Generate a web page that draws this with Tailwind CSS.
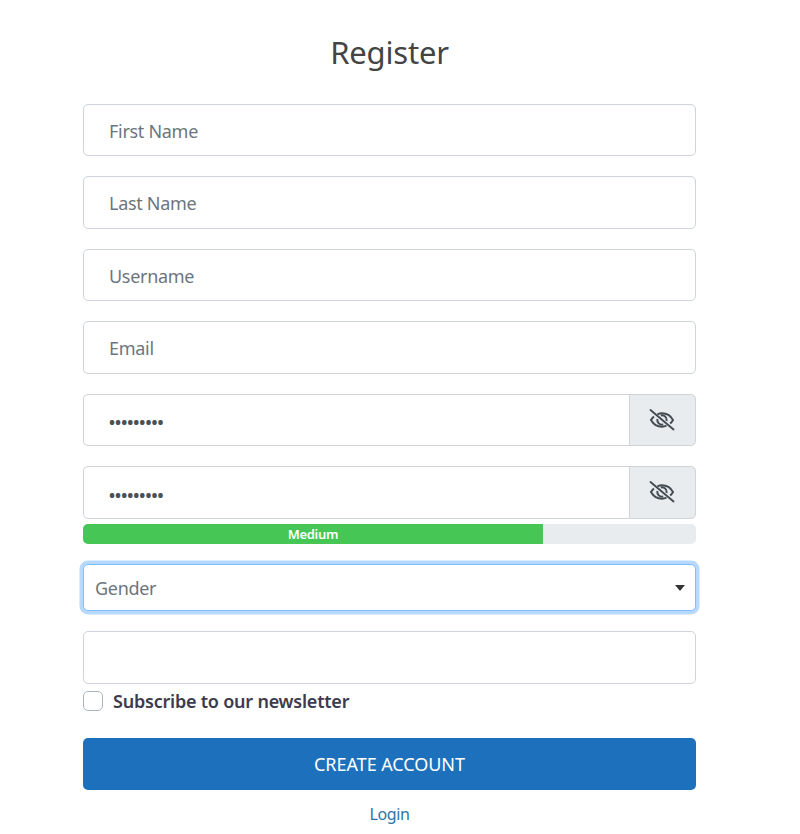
<!DOCTYPE html>
<html lang="en">
<head>
<meta charset="utf-8">
<title>Register</title>
<script src="https://cdn.jsdelivr.net/npm/@tailwindcss/browser@4"></script>
</head>
<body class="bg-white font-['Noto_Sans','Liberation_Sans',sans-serif] h-[834px] overflow-hidden">
<main class="w-[613px] ml-[83px] flex flex-col">
  <h1 class="h-[104px] pt-[29px] text-center text-[31px] leading-[46px] text-[#444444] tracking-[-0.2px]">Register</h1>
  <form class="flex flex-col">
    <input type="text" placeholder="First Name" class="h-[52.4px] mb-5 pl-[25px] pr-[25px] pt-[2px] w-full bg-white border border-[#ced4da] rounded-[5px] text-[18px] tracking-[-0.3px] text-[#495057] placeholder:text-[#6c757d] outline-none">
    <input type="text" placeholder="Last Name" class="h-[52.4px] mb-5 pl-[25px] pr-[25px] pt-[1px] w-full bg-white border border-[#ced4da] rounded-[5px] text-[18px] tracking-[-0.3px] text-[#495057] placeholder:text-[#6c757d] outline-none">
    <input type="text" placeholder="Username" class="h-[52.4px] mb-5 pl-[25px] pr-[25px] pt-[2px] w-full bg-white border border-[#ced4da] rounded-[5px] text-[18px] tracking-[-0.3px] text-[#495057] placeholder:text-[#6c757d] outline-none">
    <input type="email" placeholder="Email" class="h-[52.4px] mb-5 pl-[25px] pr-[25px] pt-[2px] w-full bg-white border border-[#ced4da] rounded-[5px] text-[18px] tracking-[-0.3px] text-[#495057] placeholder:text-[#6c757d] outline-none">
    <div class="flex h-[52.4px] mb-5">
      <input type="password" value="123456789" class="flex-1 min-w-0 h-full pl-[25px] pr-[25px] pt-[5px] bg-white border border-[#ced4da] rounded-l-[5px] text-[16px] font-bold tracking-[0.05px] text-[#495057] outline-none">
      <span class="w-[67px] h-full -ml-px flex items-center justify-center bg-[#e9ecef] border border-[#ced4da] rounded-r-[5px] text-[#444b52]">
        <svg class="w-[26px] h-[22px] -translate-x-px" viewBox="0 0 26 22" fill="none" stroke="currentColor" stroke-width="2" stroke-linecap="butt"><path d="M8.500 5.300C10 4.600 11.400 4.300 13 4.300c4.600 0 8.700 2.600 11 6.700-.8 1.400-1.700 2.600-2.900 3.600"/><path d="M17.500 16.700c-1.500.7-2.900 1-4.500 1-4.600 0-8.700-2.600-11-6.700.8-1.400 1.700-2.600 2.900-3.600"/><path d="M8.400 10A4.700 4.700 0 0 0 14.200 15.500"/><path d="M11.800 6.500A4.700 4.700 0 0 1 17.600 12"/><path d="M1.500 1 24.500 20.500" stroke-width="1.900" stroke-linecap="round"/></svg>
      </span>
    </div>
    <div class="flex h-[53px]">
      <input type="password" value="123456789" class="flex-1 min-w-0 h-full pl-[25px] pr-[25px] pt-[5px] bg-white border border-[#ced4da] rounded-l-[5px] text-[16px] font-bold tracking-[0.05px] text-[#495057] outline-none">
      <span class="w-[67px] h-full -ml-px flex items-center justify-center bg-[#e9ecef] border border-[#ced4da] rounded-r-[5px] text-[#444b52]">
        <svg class="w-[26px] h-[22px] -translate-x-px" viewBox="0 0 26 22" fill="none" stroke="currentColor" stroke-width="2" stroke-linecap="butt"><path d="M8.500 5.300C10 4.600 11.400 4.300 13 4.300c4.600 0 8.700 2.600 11 6.700-.8 1.400-1.700 2.600-2.900 3.600"/><path d="M17.500 16.700c-1.500.7-2.900 1-4.500 1-4.600 0-8.700-2.600-11-6.700.8-1.400 1.700-2.600 2.900-3.600"/><path d="M8.400 10A4.700 4.700 0 0 0 14.200 15.500"/><path d="M11.800 6.500A4.700 4.700 0 0 1 17.600 12"/><path d="M1.500 1 24.500 20.500" stroke-width="1.900" stroke-linecap="round"/></svg>
      </span>
    </div>
    <div class="mt-[5px] h-5 w-full flex bg-[#e9ecef] rounded-[5px] overflow-hidden">
      <div class="w-[75%] h-full bg-[#45c655] text-white text-[13px] font-semibold leading-[20px] text-center tracking-[-0.3px]">Medium</div>
    </div>
    <div class="mt-[20px] mb-[20px] h-[47px] w-full relative bg-white border border-[#80bdff] rounded-[5px] shadow-[0_0_0_3.500px_#b6d9fd] flex items-center pl-[11px] pt-[3px] text-[18px] tracking-[-0.3px] text-[#6c757d]">
      Gender
      <span class="absolute right-[10px] top-[20px] w-0 h-0 border-x-[5px] border-x-transparent border-t-[6px] border-t-[#333333]"></span>
    </div>
    <input type="text" aria-label="Captcha" class="h-[53px] px-[25px] w-full bg-white border border-[#ced4da] rounded-[5px] text-[18px] outline-none">
    <label class="mt-[7px] flex items-center h-5">
      <span class="w-5 h-5 bg-white border border-[#adb5bd] rounded-[5px]"></span>
      <span class="ml-[10px] pt-[2px] text-[18px] font-semibold tracking-[-0.22px] text-[#3e3a4e]">Subscribe to our newsletter</span>
    </label>
    <button type="button" class="mt-[27px] h-[52px] w-full pt-[2px] bg-[#1d71bc] rounded-[5px] text-white text-[18px] tracking-[-0.05px] text-center">CREATE ACCOUNT</button>
    <a href="#" class="mt-[12px] text-center text-[#2d74a8] text-[16px] leading-6 tracking-[-0.4px]">Login</a>
  </form>
</main>
</body>
</html>
